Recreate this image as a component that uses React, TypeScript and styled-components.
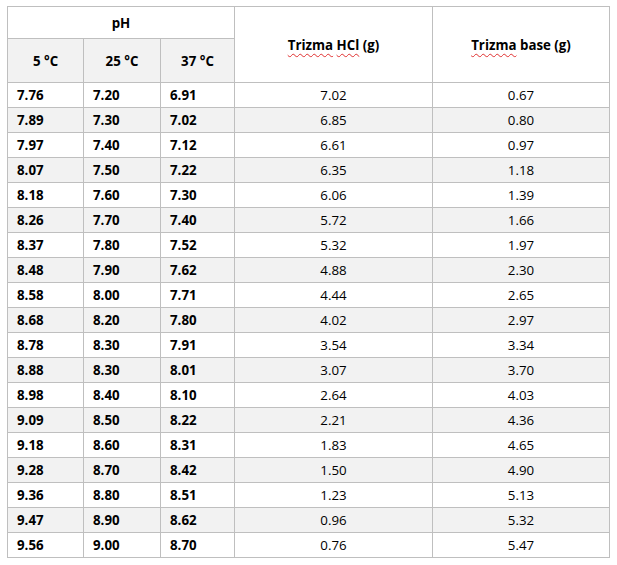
import React from "react";
import styled, { createGlobalStyle } from "styled-components";

const Global = createGlobalStyle`
  html, body { margin: 0; padding: 0; background: #ffffff; }
  body { font-family: "Open Sans", "Liberation Sans", sans-serif; color: #000; }
`;

const Page = styled.div`
  padding: 6px 0 0 7px;
`;

const Table = styled.table`
  border-collapse: collapse;
  table-layout: fixed;
  width: 602px;
  font-size: 13.3px;
`;

const Th = styled.th<{ $shade?: boolean; $h: number }>`
  border: 1px solid #bfbfbf;
  height: ${(p) => p.$h}px;
  padding: 0;
  box-sizing: border-box;
  text-align: center;
  vertical-align: middle;
  font-weight: 700;
  background: ${(p) => (p.$shade ? "#f2f2f2" : "#ffffff")};
`;

const Row = styled.tr<{ $shade: boolean }>`
  background: ${(p) => (p.$shade ? "#f2f2f2" : "#ffffff")};
`;

const PhCell = styled.td`
  border: 1px solid #bfbfbf;
  height: 25px;
  box-sizing: border-box;
  padding: 0 0 0 9px;
  font-weight: 700;
  text-align: left;
  vertical-align: middle;
`;

const MassCell = styled.td`
  border: 1px solid #bfbfbf;
  height: 25px;
  box-sizing: border-box;
  padding: 0;
  font-weight: 400;
  text-align: center;
  vertical-align: middle;
`;

const Spell = styled.span`
  text-decoration: underline wavy #e03030;
  text-decoration-thickness: 1px;
  text-underline-offset: 3px;
`;

const rows: [string, string, string, string, string][] = [
  ["7.76", "7.20", "6.91", "7.02", "0.67"],
  ["7.89", "7.30", "7.02", "6.85", "0.80"],
  ["7.97", "7.40", "7.12", "6.61", "0.97"],
  ["8.07", "7.50", "7.22", "6.35", "1.18"],
  ["8.18", "7.60", "7.30", "6.06", "1.39"],
  ["8.26", "7.70", "7.40", "5.72", "1.66"],
  ["8.37", "7.80", "7.52", "5.32", "1.97"],
  ["8.48", "7.90", "7.62", "4.88", "2.30"],
  ["8.58", "8.00", "7.71", "4.44", "2.65"],
  ["8.68", "8.20", "7.80", "4.02", "2.97"],
  ["8.78", "8.30", "7.91", "3.54", "3.34"],
  ["8.88", "8.30", "8.01", "3.07", "3.70"],
  ["8.98", "8.40", "8.10", "2.64", "4.03"],
  ["9.09", "8.50", "8.22", "2.21", "4.36"],
  ["9.18", "8.60", "8.31", "1.83", "4.65"],
  ["9.28", "8.70", "8.42", "1.50", "4.90"],
  ["9.36", "8.80", "8.51", "1.23", "5.13"],
  ["9.47", "8.90", "8.62", "0.96", "5.32"],
  ["9.56", "9.00", "8.70", "0.76", "5.47"],
];

export default function App() {
  return (
    <>
      <Global />
      <Page>
        <Table>
          <colgroup>
            <col style={{ width: 76 }} />
            <col style={{ width: 77 }} />
            <col style={{ width: 74 }} />
            <col style={{ width: 198 }} />
            <col style={{ width: 177 }} />
          </colgroup>
          <thead>
            <tr>
              <Th colSpan={3} $h={32}>pH</Th>
              <Th rowSpan={2} $h={76}>
                <Spell>Trizma</Spell> <Spell>HCl</Spell> (g)
              </Th>
              <Th rowSpan={2} $h={76}>
                <Spell>Trizma</Spell> base (g)
              </Th>
            </tr>
            <tr>
              <Th $shade $h={44}>5 °C</Th>
              <Th $shade $h={44}>25 °C</Th>
              <Th $shade $h={44}>37 °C</Th>
            </tr>
          </thead>
          <tbody>
            {rows.map((r, i) => (
              <Row key={i} $shade={i % 2 === 1}>
                <PhCell>{r[0]}</PhCell>
                <PhCell>{r[1]}</PhCell>
                <PhCell>{r[2]}</PhCell>
                <MassCell>{r[3]}</MassCell>
                <MassCell>{r[4]}</MassCell>
              </Row>
            ))}
          </tbody>
        </Table>
      </Page>
    </>
  );
}
